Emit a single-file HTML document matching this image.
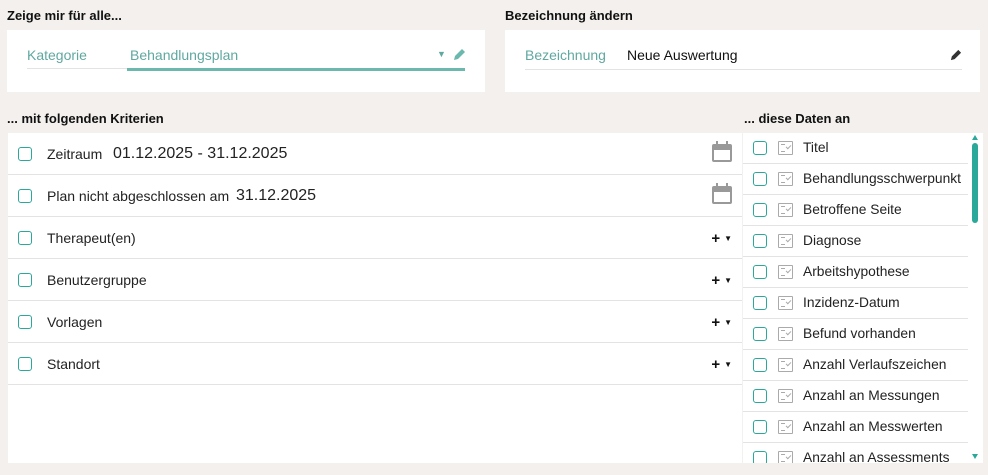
<!DOCTYPE html>
<html><head><meta charset="utf-8"><style>
*{box-sizing:border-box;margin:0;padding:0}
body{width:988px;height:475px;background:#f3f0ed;font-family:"Liberation Sans",sans-serif;color:#222;position:relative;overflow:hidden;font-size:14px}
.abs{position:absolute}
h3{position:absolute;font-size:13px;font-weight:bold;color:#111}
.box{position:absolute;background:#fff}
.cb{position:absolute;width:14px;height:14px;border:1.5px solid #2aa89a;border-radius:3px;background:#fff}
.row{position:absolute;left:0;width:734px;height:42px;border-bottom:1px solid #e3e3e3}
.row span{position:absolute;top:13px}
.drow{position:absolute;left:0;width:225px;height:31px;border-bottom:1px solid #e3e3e3}
.drow .t{position:absolute;left:60px;top:7px;font-size:13.8px}
.ic{position:absolute;left:35px;top:8px;width:15px;height:14px;border:1.5px solid #aaa;border-radius:1px}
.ic:before{content:"";position:absolute;left:2px;top:2px;width:4px;height:6px;border-top:1.5px solid #aaa;border-bottom:1.5px solid #aaa}
.ic:after{content:"";position:absolute;left:7px;top:3px;width:4px;height:2px;border-left:1.5px solid #aaa;border-bottom:1.5px solid #aaa;transform:rotate(-45deg)}
.pl{position:absolute;right:10px;top:13px;font-weight:bold;font-size:15px;color:#111}
.pl i{font-style:normal;font-size:8px;margin-left:4px;vertical-align:2px}
.cal{position:absolute;right:10px;top:11px;width:20px;height:18px;background:#999;border-radius:2px}
.cal:before{content:"";position:absolute;left:2px;top:6px;width:16px;height:10px;background:#fff}
.cal:after{content:"";position:absolute;left:4px;top:-3px;width:2px;height:4px;background:#999;box-shadow:10px 0 #999}
</style></head><body>
<h3 style="left:7px;top:8px">Zeige mir für alle...</h3>
<h3 style="left:505px;top:8px">Bezeichnung ändern</h3>
<div class="box" style="left:7px;top:30px;width:478px;height:62px">
 <div class="abs" style="left:20px;top:17px;color:#5fa8a0">Kategorie</div>
 <div class="abs" style="left:20px;top:38px;width:100px;height:1px;background:#e3e3e3"></div>
 <div class="abs" style="left:123px;top:17px;color:#5fa8a0">Behandlungsplan</div>
 <div class="abs" style="left:120px;top:38px;width:338px;height:3px;background:#6bb8ae"></div>
 <div class="abs" style="left:430px;top:19px;color:#5fa8a0;font-size:9px">▼</div>
 <svg class="abs" style="left:446px;top:18px" width="13" height="13" viewBox="0 0 13 13"><path d="M1 12 L2 8 L9 1 L12 4 L5 11 Z" fill="#6bb8ae"/></svg>
</div>
<div class="box" style="left:505px;top:30px;width:475px;height:62px">
 <div class="abs" style="left:20px;top:17px;color:#5fa8a0">Bezeichnung</div>
 <div class="abs" style="left:20px;top:39px;width:437px;height:1px;background:#e3e3e3"></div>
 <div class="abs" style="left:122px;top:17px;color:#111">Neue Auswertung</div>
 <svg class="abs" style="left:445px;top:19px" width="12" height="12" viewBox="0 0 13 13"><path d="M1 12 L2 8 L9 1 L12 4 L5 11 Z" fill="#333"/></svg>
</div>
<h3 style="left:7px;top:111px">... mit folgenden Kriterien</h3>
<h3 style="left:744px;top:111px">... diese Daten an</h3>
<div class="box" style="left:8px;top:133px;width:734px;height:330px">
 <div class="row" style="top:0"><div class="cb" style="left:10px;top:14px"></div><span style="left:39px">Zeitraum</span><span style="left:105px;top:12px;font-size:16px">01.12.2025 - 31.12.2025</span><div class="cal"></div></div>
 <div class="row" style="top:42px"><div class="cb" style="left:10px;top:14px"></div><span style="left:39px">Plan nicht abgeschlossen am</span><span style="left:228px;top:12px;font-size:16px">31.12.2025</span><div class="cal"></div></div>
 <div class="row" style="top:84px"><div class="cb" style="left:10px;top:14px"></div><span style="left:39px">Therapeut(en)</span><div class="pl">+<i>▼</i></div></div>
 <div class="row" style="top:126px"><div class="cb" style="left:10px;top:14px"></div><span style="left:39px">Benutzergruppe</span><div class="pl">+<i>▼</i></div></div>
 <div class="row" style="top:168px"><div class="cb" style="left:10px;top:14px"></div><span style="left:39px">Vorlagen</span><div class="pl">+<i>▼</i></div></div>
 <div class="row" style="top:210px"><div class="cb" style="left:10px;top:14px"></div><span style="left:39px">Standort</span><div class="pl">+<i>▼</i></div></div>
</div>
<div class="box" style="left:743px;top:133px;width:225px;height:330px;overflow:hidden">
 <div class="drow" style="top:0"><div class="cb" style="left:10px;top:8px"></div><div class="ic"></div><div class="t">Titel</div></div>
 <div class="drow" style="top:31px"><div class="cb" style="left:10px;top:8px"></div><div class="ic"></div><div class="t">Behandlungsschwerpunkt</div></div>
 <div class="drow" style="top:62px"><div class="cb" style="left:10px;top:8px"></div><div class="ic"></div><div class="t">Betroffene Seite</div></div>
 <div class="drow" style="top:93px"><div class="cb" style="left:10px;top:8px"></div><div class="ic"></div><div class="t">Diagnose</div></div>
 <div class="drow" style="top:124px"><div class="cb" style="left:10px;top:8px"></div><div class="ic"></div><div class="t">Arbeitshypothese</div></div>
 <div class="drow" style="top:155px"><div class="cb" style="left:10px;top:8px"></div><div class="ic"></div><div class="t">Inzidenz-Datum</div></div>
 <div class="drow" style="top:186px"><div class="cb" style="left:10px;top:8px"></div><div class="ic"></div><div class="t">Befund vorhanden</div></div>
 <div class="drow" style="top:217px"><div class="cb" style="left:10px;top:8px"></div><div class="ic"></div><div class="t">Anzahl Verlaufszeichen</div></div>
 <div class="drow" style="top:248px"><div class="cb" style="left:10px;top:8px"></div><div class="ic"></div><div class="t">Anzahl an Messungen</div></div>
 <div class="drow" style="top:279px"><div class="cb" style="left:10px;top:8px"></div><div class="ic"></div><div class="t">Anzahl an Messwerten</div></div>
 <div class="drow" style="top:310px"><div class="cb" style="left:10px;top:8px"></div><div class="ic"></div><div class="t">Anzahl an Assessments</div></div>
</div>
<div class="box" style="left:968px;top:133px;width:15px;height:330px">
 <div class="abs" style="left:4px;top:2px;width:0;height:0;border-left:3.5px solid transparent;border-right:3.5px solid transparent;border-bottom:5px solid #2aa89a"></div>
 <div class="abs" style="left:4px;top:10px;width:6px;height:80px;background:#2aa89a;border-radius:3px"></div>
 <div class="abs" style="left:4px;top:321px;width:0;height:0;border-left:3.5px solid transparent;border-right:3.5px solid transparent;border-top:5px solid #2aa89a"></div>
</div>
</body></html>
